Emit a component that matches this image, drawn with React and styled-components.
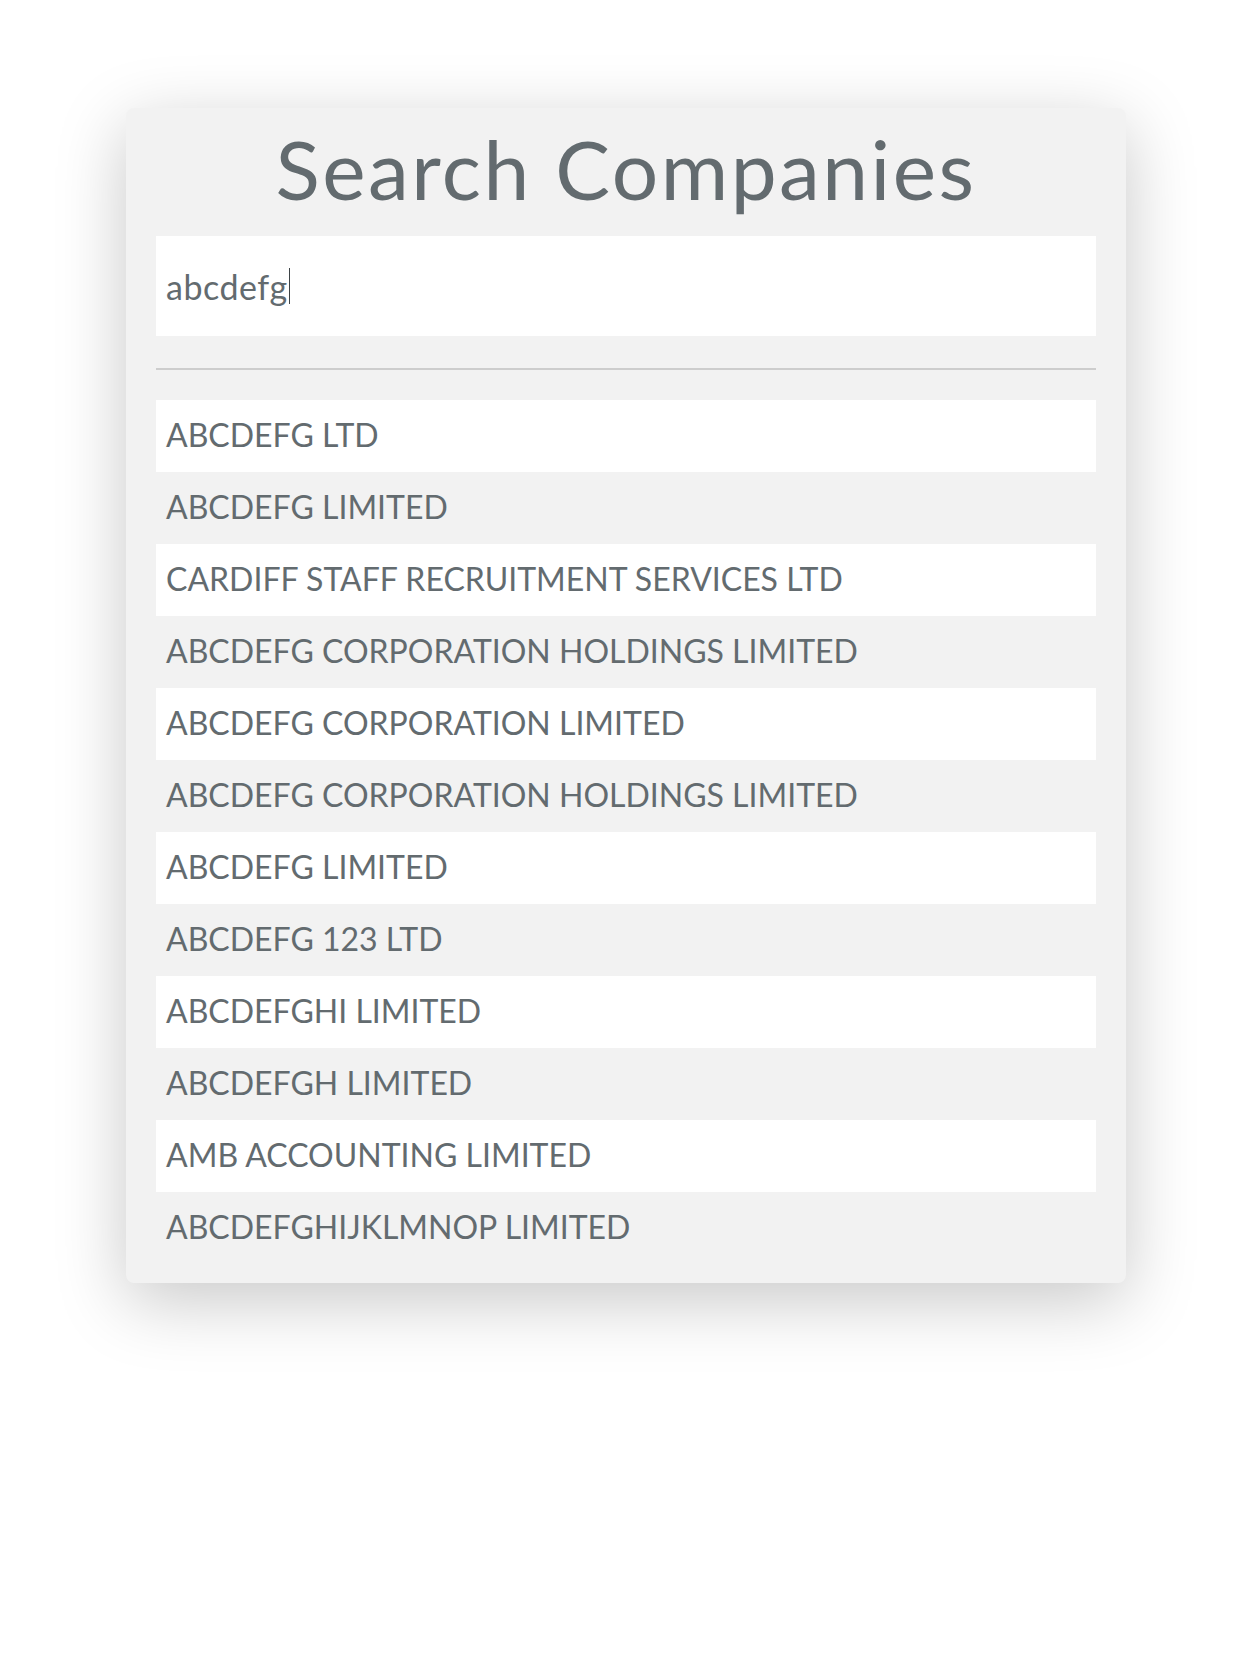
import React from "react";
import styled, { createGlobalStyle } from "styled-components";

const companies = [
  "ABCDEFG LTD",
  "ABCDEFG LIMITED",
  "CARDIFF STAFF RECRUITMENT SERVICES LTD",
  "ABCDEFG CORPORATION HOLDINGS LIMITED",
  "ABCDEFG CORPORATION LIMITED",
  "ABCDEFG CORPORATION HOLDINGS LIMITED",
  "ABCDEFG LIMITED",
  "ABCDEFG 123 LTD",
  "ABCDEFGHI LIMITED",
  "ABCDEFGH LIMITED",
  "AMB ACCOUNTING LIMITED",
  "ABCDEFGHIJKLMNOP LIMITED",
];

const GlobalStyle = createGlobalStyle`
  html, body {
    margin: 0;
    padding: 0;
    background: #fff;
  }
  body {
    font-family: Lato, "Open Sans", sans-serif;
    color: #636b6f;
  }
`;

const Page = styled.div`
  padding: 108px 0 200px;
`;

const Card = styled.div`
  width: 1000px;
  margin: 0 auto;
  box-sizing: border-box;
  padding: 11px 30px 19px;
  background: #f2f2f2;
  border-radius: 8px;
  box-shadow: 0 18px 70px rgba(0, 0, 0, 0.22);
`;

const Title = styled.h1`
  margin: 0 0 19px;
  font-size: 82px;
  font-weight: 400;
  letter-spacing: 2.5px;
  line-height: 98px;
  text-align: center;
  color: #636b6f;
`;

const SearchBox = styled.div`
  display: flex;
  align-items: center;
  height: 100px;
  padding: 0 10px;
  background: #fff;
  font-size: 34px;
  letter-spacing: 0.5px;
  color: #636b6f;
`;

const Caret = styled.span`
  display: inline-block;
  width: 1.5px;
  height: 36px;
  margin-left: 1px;
  background: #3d4346;
`;

const Divider = styled.hr`
  margin: 32px 0 30px;
  height: 2px;
  border: 0;
  background: #cdcdcd;
`;

const List = styled.ul`
  list-style: none;
  margin: 0;
  padding: 0;
`;

const Row = styled.li`
  display: flex;
  align-items: center;
  box-sizing: border-box;
  height: 72px;
  padding: 0 10px 4px;
  font-size: 32px;
  background: ${(p) => (p.$striped ? "#fff" : "transparent")};
`;

export default function App() {
  return (
    <>
      <GlobalStyle />
      <Page>
        <Card>
          <Title>Search Companies</Title>
          <SearchBox role="textbox">
            abcdefg
            <Caret />
          </SearchBox>
          <Divider />
          <List>
            {companies.map((name, i) => (
              <Row key={i} $striped={i % 2 === 0}>
                {name}
              </Row>
            ))}
          </List>
        </Card>
      </Page>
    </>
  );
}
